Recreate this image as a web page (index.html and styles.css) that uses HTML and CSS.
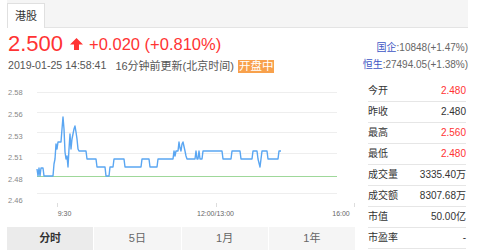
FILE: index.html
```html
<!DOCTYPE html>
<html lang="zh-CN">
<head>
    <meta charset="UTF-8">
    <title>港股行情</title>
    <link rel="stylesheet" href="styles.css">
</head>
<body>
<div class="quote">
    <div class="market-bar">
        <span class="market-tab">港股</span>
    </div>

    <div class="summary">
        <div class="summary-main">
            <div class="price-line">
                <span class="price">2.500</span>
                <svg class="arrow" width="13" height="12" viewBox="0 0 13 12">
                    <polygon points="6.5,0 13,6.5 9,6.5 9,12 4,12 4,6.5 0,6.5" fill="#f33"/>
                </svg>
                <span class="change">+0.020 (+0.810%)</span>
            </div>
            <div class="time-line">
                <span class="stamp">2019-01-25 14:58:41</span>
                <span class="updated">16分钟前更新(北京时间)</span>
                <span class="status">开盘中</span>
            </div>
        </div>
        <div class="indices">
            <div><span class="index-name">国企</span>:10848(+1.47%)</div>
            <div><span class="index-name">恒生</span>:27494.05(+1.38%)</div>
        </div>
    </div>

    <div class="board">
        <div class="chart-col">
            <svg class="chart" width="348" height="143" viewBox="0 0 348 143">
                <g stroke="#eeeeee" stroke-width="1">
                    <line x1="30" y1="11.5" x2="330" y2="11.5"/>
                    <line x1="30" y1="31.5" x2="330" y2="31.5"/>
                    <line x1="30" y1="51.5" x2="330" y2="51.5"/>
                    <line x1="30" y1="72.5" x2="330" y2="72.5"/>
                    <line x1="30" y1="112.5" x2="330" y2="112.5"/>
                </g>
                <line x1="30" y1="95.5" x2="330" y2="95.5" stroke="#9fd89a" stroke-width="1.2"/>
                <polyline fill="none" stroke="#5aa6f2" stroke-width="1.4" stroke-linejoin="round"
                          points="30,88 31,95 32,87 33,95 34,87 36,87 37,95 46,95 47,83 48,78 49,63 50,68 51,61 54,61 55,48 56,36 57,48 58,71 59,78 60,75 61,86 62,68 63,53 64,68 65,58 67,48 68,45 69,51 70,58 71,68 72,70 79,70 80,78 89,78 90,86 98,86 99,95 102,95 103,86 106,86 107,78 117,78 118,86 134,86 135,78 142,78 143,86 150,86 151,78 166,78 167,70 168,75 169,70 171,70 172,61 173,67 174,70 175,63 176,61 178,70 179,75 180,78 188,78 189,70 190,78 191,78 192,70 193,78 195,78 196,70 215,70 216,78 224,78 225,70 233,70 234,78 245,78 246,70 250,70 251,78 253,86 254,78 255,70 260,70 261,78 271,78 272,70 274,70"/>
                <g class="axis-y">
                    <text x="1" y="14">2.58</text>
                    <text x="1" y="36">2.56</text>
                    <text x="1" y="58">2.53</text>
                    <text x="1" y="79">2.51</text>
                    <text x="1" y="101">2.48</text>
                    <text x="1" y="122">2.46</text>
                </g>
                <g stroke="#dddddd" stroke-width="1">
                    <line x1="50.5" y1="122" x2="50.5" y2="126"/>
                    <line x1="209.5" y1="122" x2="209.5" y2="126"/>
                    <line x1="347.5" y1="122" x2="347.5" y2="126"/>
                </g>
                <g class="axis-x">
                    <text x="57.5" y="135">9:30</text>
                    <text x="208.5" y="135">12:00/13:00</text>
                    <text x="334" y="135">16:00</text>
                </g>
            </svg>
            <div class="periods">
                <span class="period active">分时</span>
                <span class="period">5日</span>
                <span class="period">1月</span>
                <span class="period">1年</span>
            </div>
        </div>

        <ul class="stats">
            <li><span>今开</span><span class="up">2.480</span></li>
            <li><span>昨收</span><span>2.480</span></li>
            <li><span>最高</span><span class="up">2.560</span></li>
            <li><span>最低</span><span class="up">2.480</span></li>
            <li><span>成交量</span><span>3335.40万</span></li>
            <li><span>成交额</span><span>8307.68万</span></li>
            <li><span>市值</span><span>50.00亿</span></li>
            <li><span>市盈率</span><span>-</span></li>
        </ul>
    </div>
</div>
</body>
</html>
```

FILE: styles.css
```css
body
{
    margin: 0;
    background: #fff;
    font-family: "Liberation Sans", "Noto Sans CJK SC", sans-serif;
    color: #333;
}
.quote
{
    width: 461px;
    margin-left: 7px;
}

/* market tab bar */
.market-bar
{
    height: 24px;
    padding-top: 3px;
    background: #f5f5f5;
    border-bottom: 1px solid #e4e4e4;
}
.market-tab
{
    display: block;
    width: 36px;
    height: 24px;
    line-height: 24px;
    text-align: center;
    font-size: 11px;
    color: #333;
    background: #fff;
    border: 1px solid #e0e0e0;
    border-bottom: none;
}

/* price summary */
.summary
{
    display: flex;
    justify-content: space-between;
    height: 48px;
    padding-top: 3px;
}
.price-line
{
    display: flex;
    align-items: center;
    height: 26px;
    color: #f33;
}
.price
{
    font-size: 22px;
    margin-left: 1px;
}
.arrow
{
    margin-left: 7px;
}
.change
{
    font-size: 16.5px;
    margin-left: 6px;
}
.time-line
{
    display: flex;
    align-items: center;
    height: 16px;
    color: #555;
}
.stamp
{
    font-size: 10.6px;
    margin-left: 1px;
}
.updated
{
    font-size: 11px;
    margin-left: 9px;
}
.status
{
    font-size: 11.5px;
    line-height: 13px;
    padding: 0 1px;
    margin: 2px 0 0 4px;
    color: #fff;
    background: #f8a14c;
}
.indices
{
    padding-top: 8px;
    font-size: 10px;
    line-height: 17px;
    text-align: right;
    color: #666;
}
.index-name
{
    color: #3d55c4;
}

/* chart + stats */
.board
{
    display: flex;
    margin-top: 2px;
}
.chart-col
{
    width: 348px;
}
.chart
{
    display: block;
    overflow: visible;
}
.axis-y text
{
    font-size: 7.5px;
    fill: #888;
}
.axis-x text
{
    font-size: 7px;
    fill: #666;
    text-anchor: middle;
}
.periods
{
    display: grid;
    grid-template-columns: repeat(4, 1fr);
    gap: 1px;
    margin-top: 3px;
}
.period
{
    height: 23px;
    line-height: 23px;
    text-align: center;
    font-size: 11px;
    color: #666;
    background: #f5f5f5;
}
.period.active
{
    font-weight: bold;
    color: #333;
    background: #ebebeb;
}
.stats
{
    list-style: none;
    width: 98px;
    margin: 0 0 0 13px;
    padding: 0;
    font-size: 10px;
}
.stats li
{
    display: flex;
    justify-content: space-between;
    height: 20px;
    line-height: 20px;
    border-bottom: 1px solid #e6e6e6;
    color: #333;
}
.stats .up
{
    color: #f33;
}
```
